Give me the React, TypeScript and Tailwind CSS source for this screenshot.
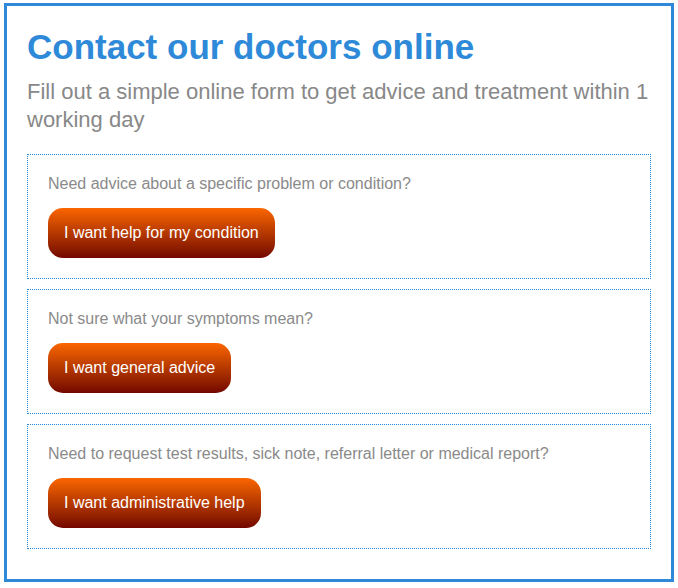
import React from 'react';

const options = [
  { question: 'Need advice about a specific problem or condition?', label: 'I want help for my condition' },
  { question: 'Not sure what your symptoms mean?', label: 'I want general advice' },
  { question: 'Need to request test results, sick note, referral letter or medical report?', label: 'I want administrative help' },
];

const OptionBox: React.FC<{ question: string; label: string }> = ({ question, label }) => (
  <div className="border border-dotted border-[#2b87d6] px-5 pt-5 pb-5 mb-[10px] last:mb-0">
    <p className="text-[16px] leading-[18px] text-[#8a8a8a]">{question}</p>
    <button className="mt-[15px] h-[50px] px-4 rounded-[15px] bg-gradient-to-b from-[#fb6600] to-[#740600] text-white text-[16px]">
      {label}
    </button>
  </div>
);

export default function App() {
  return (
    <div className="bg-white min-h-[588px] pt-[3px] px-[4px] font-['Liberation_Sans',Arial,sans-serif]">
      <div className="border-[3px] border-[#2e8ad8] px-5 pt-[21px] pb-[30px]">
        <h1 className="text-[35px] leading-[40px] font-bold text-[#2e8ad9]">Contact our doctors online</h1>
        <p className="mt-[11px] text-[22px] leading-[28px] text-[#888888]">
          Fill out a simple online form to get advice and treatment within 1 working day
        </p>
        <div className="mt-[20px]">
          {options.map((o) => (
            <OptionBox key={o.label} question={o.question} label={o.label} />
          ))}
        </div>
      </div>
    </div>
  );
}
